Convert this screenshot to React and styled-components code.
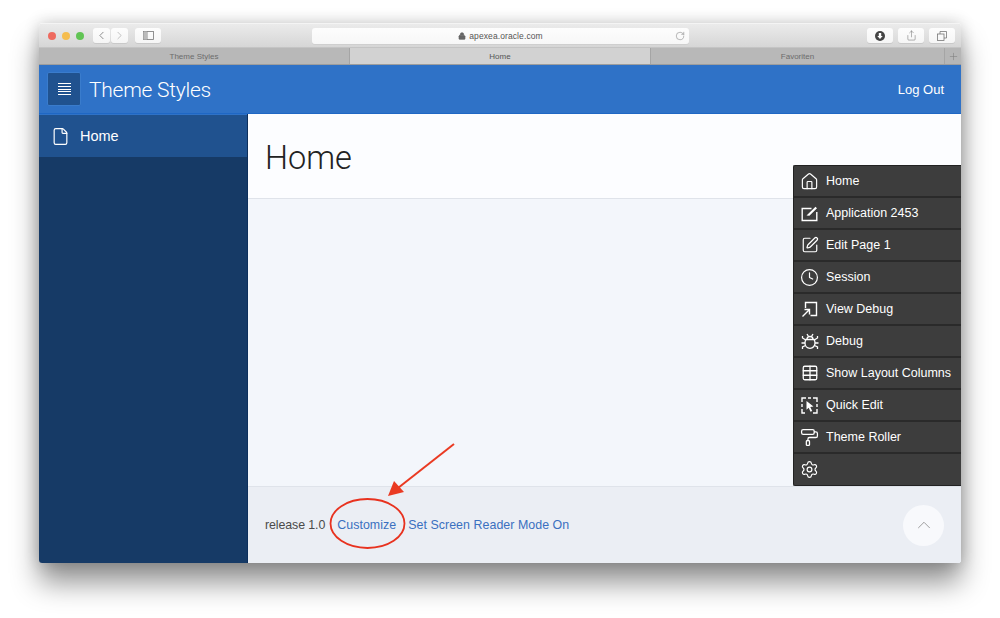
import React from "react";
import styled, { createGlobalStyle } from "styled-components";
import {
  ChevronLeft,
  ChevronRight,
  ChevronUp,
  Clock,
  File,
  Home,
  Lock,
  PaintRoller,
  Plus,
  RotateCw,
  Settings,
  Share,
  SquarePen,
  Table,
} from "lucide-react";

const SANS = `"Liberation Sans", Arial, sans-serif`;

const GlobalStyle = createGlobalStyle`
  html, body {
    margin: 0;
    padding: 0;
    background: #fff;
    overflow: hidden;
  }
  * {
    box-sizing: border-box;
  }
`;

const Stage = styled.div`
  width: 1000px;
  height: 618px;
  padding: 23px 39px 55px;
  font-family: ${SANS};
`;

const BrowserWindow = styled.div`
  position: relative;
  width: 922px;
  height: 540px;
  display: flex;
  flex-direction: column;
  border-radius: 4px 4px 3px 3px;
  overflow: hidden;
`;

const WindowShadow = styled.div`
  border-radius: 4px;
  box-shadow: 0 20px 28px rgba(0, 0, 0, 0.42), 0 0 16px rgba(0, 0, 0, 0.2);
`;

const TitleBar = styled.div`
  height: 25px;
  flex: none;
  display: flex;
  align-items: center;
  padding: 0 6px 0 9px;
  background: linear-gradient(#ebebeb, #d6d6d6);
  border-top: 1px solid #f4f4f4;
  border-bottom: 1px solid #c4c4c4;
`;

const Light = styled.span`
  width: 8px;
  height: 8px;
  border-radius: 50%;
  margin-right: 6px;
  background: ${(p) => p.$color};
`;

const NavGroup = styled.div`
  display: flex;
  gap: 1px;
  margin-left: ${(p) => p.$left || 0}px;
`;

const ToolButton = styled.div`
  width: ${(p) => p.$width}px;
  height: 15px;
  display: flex;
  align-items: center;
  justify-content: center;
  background: linear-gradient(#fdfdfd, #f5f5f5);
  border-radius: 3px;
  box-shadow: 0 1px 0 #c9c9c9;
  color: ${(p) => p.$color || "#6b6b6b"};
`;

const AddressBar = styled.div`
  position: relative;
  width: 377px;
  height: 16px;
  margin-left: 151px;
  display: flex;
  align-items: center;
  justify-content: center;
  gap: 3px;
  background: linear-gradient(#fdfdfd, #f7f7f7);
  border-radius: 3px;
  box-shadow: 0 1px 0 #cfcfcf;
  font-size: 8.5px;
  letter-spacing: 0.1px;
  color: #555;
`;

const Reload = styled.span`
  position: absolute;
  right: 4px;
  top: 3px;
  display: flex;
  color: #777;
`;

const RightTools = styled.div`
  margin-left: auto;
  display: flex;
  gap: 5px;
`;

const TabBar = styled.div`
  height: 17px;
  flex: none;
  display: flex;
  background: #b6b6b6;
  border-bottom: 1px solid #9d9d9d;
`;

const Tab = styled.div`
  flex: ${(p) => p.$grow};
  display: flex;
  align-items: center;
  justify-content: center;
  font-size: 8px;
  color: ${(p) => (p.$active ? "#555" : "#6c6c6c")};
  background: ${(p) => (p.$active ? "#d2d2d2" : "#b8b8b8")};
  border-right: 1px solid #a5a5a5;
`;

const AddTab = styled.div`
  width: 16px;
  display: flex;
  align-items: center;
  justify-content: center;
  color: #7d7d7d;
`;

const Header = styled.header`
  height: 49px;
  flex: none;
  display: flex;
  align-items: center;
  padding: 0 17px 0 8px;
  background: #2f72c7;
  border-bottom: 1px solid #1f67c4;
  color: #fff;
`;

const MenuToggle = styled.div`
  width: 34px;
  height: 34px;
  display: flex;
  flex-direction: column;
  align-items: center;
  justify-content: center;
  gap: 1.7px;
  background: #20528f;
  border: 1px solid #3a7ccc;
  border-radius: 2px;
`;

const MenuLine = styled.span`
  width: 13px;
  height: 1px;
  background: #fff;
`;

const AppTitle = styled.div`
  margin-left: 8px;
  padding-top: 2px;
  font-family: Roboto, ${SANS};
  font-weight: 300;
  font-size: 21px;
  letter-spacing: -0.25px;
`;

const LogOut = styled.div`
  margin-left: auto;
  font-size: 13px;
`;

const Body = styled.div`
  flex: 1;
  display: flex;
  min-height: 0;
`;

const Sidebar = styled.nav`
  width: 209px;
  flex: none;
  background: #163a66;
  border-right: 1px solid #0d2f5c;
`;

const SideItem = styled.div`
  height: 43px;
  display: flex;
  align-items: center;
  gap: 10px;
  padding-left: 12px;
  background: #20528f;
  border-top: 1px solid #2f72c7;
  color: #fff;
  font-size: 14.5px;
`;

const Main = styled.main`
  flex: 1;
  display: flex;
  flex-direction: column;
  background: #f3f6fb;
`;

const PageHead = styled.div`
  height: 85px;
  flex: none;
  display: flex;
  align-items: center;
  padding: 4px 0 0 17px;
  background: #fcfdff;
  border-bottom: 1px solid #dfe3ea;
`;

const PageTitle = styled.h1`
  margin: 0;
  font-family: Roboto, ${SANS};
  font-weight: 300;
  font-size: 32.5px;
  color: #222;
`;

const Content = styled.div`
  flex: 1;
`;

const Footer = styled.footer`
  height: 77px;
  flex: none;
  display: flex;
  align-items: center;
  padding: 0 17px;
  gap: 12px;
  background: #ebeef4;
  border-top: 1px solid #dfe3ea;
  font-size: 12.4px;
  color: #4a4a4a;
`;

const ReleaseNote = styled.span`
  letter-spacing: -0.1px;
`;

const FooterLink = styled.a`
  color: #3a70c0;
  letter-spacing: 0.05px;
`;

const TopButton = styled.div`
  width: 41px;
  height: 41px;
  margin-left: auto;
  display: flex;
  align-items: center;
  justify-content: center;
  border-radius: 50%;
  background: #f8f9fc;
  color: #8b8b8b;
`;

const DevMenu = styled.div`
  position: absolute;
  top: 142px;
  right: 0;
  width: 168px;
  display: flex;
  flex-direction: column;
  background: #3d3d3d;
  border: 1px solid #222;
  border-right: 0;
  border-radius: 2px 0 0 2px;
`;

const DevRow = styled.div`
  height: 32px;
  display: flex;
  align-items: center;
  gap: 7px;
  padding-left: 6px;
  color: #fff;
  font-size: 12.5px;
  border-bottom: 2px solid #2a2a2a;
  &:last-child {
    height: 31px;
    border-bottom: 0;
  }
`;

const DevIcon = styled.span`
  width: 19px;
  height: 19px;
  flex: none;
  display: flex;
  align-items: center;
  justify-content: center;
`;

const Annotation = styled.svg`
  position: absolute;
  left: 0;
  top: 0;
  pointer-events: none;
`;

const AppIcon = () => (
  <svg width="17" height="17" viewBox="0 0 17 17" fill="none" stroke="currentColor" strokeWidth="1.4">
    <path d="M10.5 3.5H1.2v12h14.6V7" />
    <path d="M5.5 10.5 14.5 1.8l1.500 1.400-7.600 7.600-2.900-.3z" fill="currentColor" stroke="none" />
  </svg>
);

const ViewDebugIcon = () => (
  <svg width="17" height="17" viewBox="0 0 17 17" fill="none" stroke="currentColor" strokeWidth="1.4">
    <path d="M4.5 7V1.500h11v13H9.500" />
    <path d="M1.500 15.500 8 9M3.500 8.500H8.500v5" />
  </svg>
);

const BugIcon = () => (
  <svg width="18" height="17" viewBox="0 0 18 17" fill="none" stroke="currentColor" strokeWidth="1.300">
    <path d="M5 6.500h8c.8 1 1 2.300 1 3.500 0 3-2 5.300-5 5.300S4 13 4 10c0-1.200.2-2.500 1-3.500z" />
    <path d="M6 6.500C6 4.500 7 3.500 9 3.500s3 1 3 3" />
    <path d="M6 1l1.500 2.500M12 1l-1.500 2.500M4.800 7 1.500 5V3M13.200 7l3.300-2V3M4 10H.5M14 10h3.500M4.500 12.500l-3 1.500v2M13.500 12.500l3 1.500v2" />
  </svg>
);

const QuickEditIcon = () => (
  <svg width="17" height="17" viewBox="0 0 17 17" fill="none" stroke="currentColor" strokeWidth="1.400">
    <path d="M1 5V1h4M7 1h3M12 1h4v4M16 7v3M16 12v4h-4M1 7v3M1 12v4h3" />
    <path d="M5.500 4l7 5.500-3.200.4 1.900 4-1.700.8-1.800-4-2.200 2.100z" fill="currentColor" stroke="none" />
  </svg>
);

const devItems = [
  { label: "Home", icon: <Home size={19} strokeWidth={1.5} /> },
  { label: "Application 2453", icon: <AppIcon /> },
  { label: "Edit Page 1", icon: <SquarePen size={18} strokeWidth={1.6} /> },
  { label: "Session", icon: <Clock size={19} strokeWidth={1.5} /> },
  { label: "View Debug", icon: <ViewDebugIcon /> },
  { label: "Debug", icon: <BugIcon /> },
  { label: "Show Layout Columns", icon: <Table size={18} strokeWidth={1.7} /> },
  { label: "Quick Edit", icon: <QuickEditIcon /> },
  { label: "Theme Roller", icon: <PaintRoller size={19} strokeWidth={1.6} /> },
  { label: "", icon: <Settings size={19} strokeWidth={1.5} /> },
];

function App() {
  return (
    <Stage>
      <GlobalStyle />
      <WindowShadow>
        <BrowserWindow>
          <TitleBar>
            <Light $color="#ee6a5f" />
            <Light $color="#f5bd4f" />
            <Light $color="#61c454" />
            <NavGroup $left={3}>
              <ToolButton $width={17}>
                <ChevronLeft size={13} strokeWidth={1.4} />
              </ToolButton>
              <ToolButton $width={17} $color="#b0b0b0">
                <ChevronRight size={13} strokeWidth={1.4} />
              </ToolButton>
            </NavGroup>
            <NavGroup $left={7}>
              <ToolButton $width={26}>
                <svg width="11" height="9" viewBox="0 0 11 9" fill="none" stroke="#777" strokeWidth="0.8">
                  <rect x="0.5" y="0.5" width="10" height="8" />
                  <path d="M4 .5v8" />
                  <path d="M.5.500H4v8H.5z" fill="#bbb" stroke="none" />
                </svg>
              </ToolButton>
            </NavGroup>
            <AddressBar>
              <Lock size={8} color="#666" fill="#666" />
              apexea.oracle.com
              <Reload>
                <RotateCw size={10} strokeWidth={1.2} />
              </Reload>
            </AddressBar>
            <RightTools>
              <ToolButton $width={26} $color="#3a3a3a">
                <svg width="10" height="10" viewBox="0 0 10 10">
                  <circle cx="5" cy="5" r="5" fill="#444" />
                  <path d="M3.800 2h2.400v3h1.500L5 8 2.300 5h1.500z" fill="#fff" />
                </svg>
              </ToolButton>
              <ToolButton $width={26}>
                <Share size={11} strokeWidth={1.1} />
              </ToolButton>
              <ToolButton $width={26}>
                <svg width="10" height="10" viewBox="0 0 10 10" fill="none" stroke="#777" strokeWidth="0.8">
                  <rect x="0.5" y="3" width="6.500" height="6.500" />
                  <path d="M3 3V.5h6.500V7H7" />
                </svg>
              </ToolButton>
            </RightTools>
          </TitleBar>
          <TabBar>
            <Tab $grow="311">Theme Styles</Tab>
            <Tab $grow="301" $active>Home</Tab>
            <Tab $grow="294">Favoriten</Tab>
            <AddTab>
              <Plus size={11} strokeWidth={1.2} />
            </AddTab>
          </TabBar>
          <Header>
            <MenuToggle>
              <MenuLine />
              <MenuLine />
              <MenuLine />
              <MenuLine />
              <MenuLine />
            </MenuToggle>
            <AppTitle>Theme Styles</AppTitle>
            <LogOut>Log Out</LogOut>
          </Header>
          <Body>
            <Sidebar>
              <SideItem>
                <File size={19} strokeWidth={1.5} />
                Home
              </SideItem>
            </Sidebar>
            <Main>
              <PageHead>
                <PageTitle>Home</PageTitle>
              </PageHead>
              <Content />
              <Footer>
                <ReleaseNote>release 1.0</ReleaseNote>
                <FooterLink>Customize</FooterLink>
                <FooterLink>Set Screen Reader Mode On</FooterLink>
                <TopButton>
                  <ChevronUp size={22} strokeWidth={0.9} />
                </TopButton>
              </Footer>
            </Main>
          </Body>
          <DevMenu>
            {devItems.map((item) => (
              <DevRow key={item.label || "settings"}>
                <DevIcon>{item.icon}</DevIcon>
                {item.label}
              </DevRow>
            ))}
          </DevMenu>
          <Annotation width="922" height="540" viewBox="39 23 922 540">
            <ellipse cx="367.500" cy="523.500" rx="37" ry="24.500" fill="none" stroke="#e8321f" strokeWidth="1.800" />
            <path d="M454 444 L398 488" stroke="#ea3a22" strokeWidth="2" />
            <path d="M388 496 L394 481 L404 492 z" fill="#ea3a22" />
          </Annotation>
        </BrowserWindow>
      </WindowShadow>
    </Stage>
  );
}

export default App;
